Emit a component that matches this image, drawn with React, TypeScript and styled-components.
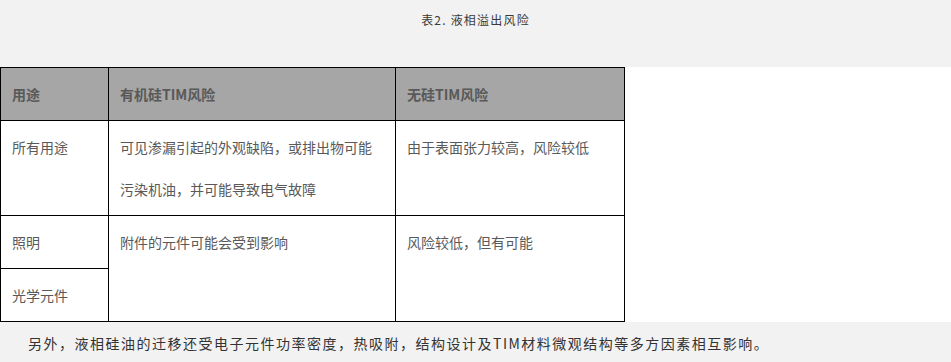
import React from "react";
import styled, { createGlobalStyle } from "styled-components";

const GlobalStyle = createGlobalStyle`
  html, body {
    margin: 0;
    padding: 0;
    background: #ffffff;
    font-family: "Noto Sans CJK SC", "Noto Sans", sans-serif;
  }
`;

const Page = styled.div`
  width: 951px;
  display: flex;
  flex-direction: column;
`;

const CaptionBand = styled.div`
  height: 67px;
  background: #f2f2f2;
  display: flex;
  justify-content: center;
  align-items: flex-start;
  box-sizing: border-box;
  padding-top: 12px;
`;

const Caption = styled.p`
  margin: 0;
  font-size: 12px;
  line-height: 16px;
  letter-spacing: 1.2px;
  color: #3a3a3a;
`;

const TableBand = styled.div`
  background: #ffffff;
`;

const Table = styled.table`
  border-collapse: collapse;
  table-layout: fixed;
  width: 624px;
`;

const Cell = styled.td<{ $head?: boolean; $width?: number }>`
  border: 1px solid #000;
  padding: 5px 18px 5px 11px;
  vertical-align: top;
  font-size: 14px;
  line-height: 42px;
  color: #595959;
  font-weight: ${(p) => (p.$head ? 700 : 400)};
  background: ${(p) => (p.$head ? "#a6a6a6" : "#ffffff")};
  width: ${(p) => (p.$width ? `${p.$width}px` : "auto")};
  box-sizing: border-box;
`;

const NoteBand = styled.div`
  background: #f2f2f2;
  min-height: 40px;
  box-sizing: border-box;
  padding: 9px 0 10px 28px;
`;

const Note = styled.p`
  margin: 0;
  font-size: 14px;
  line-height: 24px;
  letter-spacing: 1.5px;
  color: #333333;
  white-space: nowrap;
`;

export default function App() {
  return (
    <>
      <GlobalStyle />
      <Page>
        <CaptionBand>
          <Caption>表2. 液相溢出风险</Caption>
        </CaptionBand>
        <TableBand>
          <Table>
            <tbody>
              <tr>
                <Cell $head $width={108}>用途</Cell>
                <Cell $head $width={287}>有机硅TIM风险</Cell>
                <Cell $head $width={229}>无硅TIM风险</Cell>
              </tr>
              <tr>
                <Cell>所有用途</Cell>
                <Cell>可见渗漏引起的外观缺陷，或排出物可能污染机油，并可能导致电气故障</Cell>
                <Cell>由于表面张力较高，风险较低</Cell>
              </tr>
              <tr>
                <Cell>照明</Cell>
                <Cell rowSpan={2}>附件的元件可能会受到影响</Cell>
                <Cell rowSpan={2}>风险较低，但有可能</Cell>
              </tr>
              <tr>
                <Cell>光学元件</Cell>
              </tr>
            </tbody>
          </Table>
        </TableBand>
        <NoteBand>
          <Note>另外，液相硅油的迁移还受电子元件功率密度，热吸附，结构设计及TIM材料微观结构等多方因素相互影响。</Note>
        </NoteBand>
      </Page>
    </>
  );
}
